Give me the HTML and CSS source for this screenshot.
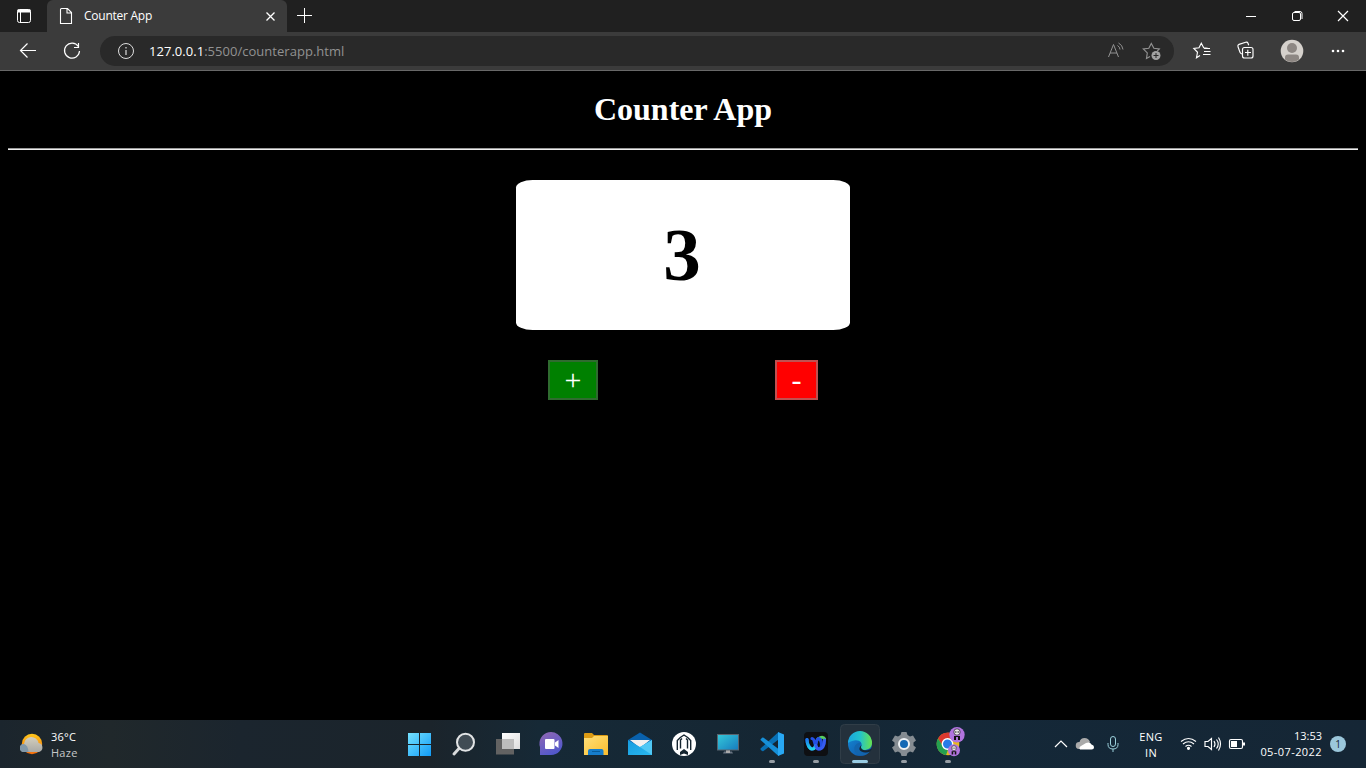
FILE: index.html
```html
<!DOCTYPE html>
<html lang="en">
<head>
<meta charset="utf-8">
<title>Counter App</title>
<link rel="stylesheet" href="styles.css">
</head>
<body>
<div class="screen">
  <header class="tabs">
    <svg class="tab-menu" width="47" height="32" viewBox="0 0 47 32" fill="none" stroke="#fff"><rect x="17.500" y="9.500" width="13" height="13" rx="2"/><path d="M17.500 11h13" stroke-width="3"/><path d="M20.500 12v10"/></svg>
    <div class="tab">
      <svg width="37" height="32" viewBox="0 0 37 32" fill="none" stroke="#fff" stroke-width="1.1"><path d="M14.500 8.500h6l4 4v11h-11v-14q0-1 1-1zM20 8.500v4.500h4.500"/></svg>
      <span class="tab-title">Counter App</span>
      <svg class="tab-close" width="32" height="32" viewBox="0 0 32 32" stroke="#fff" stroke-width="1.3"><path d="M11.500 12.500l8 8m0-8l-8 8"/></svg>
    </div>
    <svg width="36" height="32" viewBox="0 0 36 32" stroke="#fff"><path d="M10 15.500h15M17.500 8v15"/></svg>
    <svg class="window-buttons" width="138" height="32" viewBox="0 0 138 32" fill="none" stroke="#fff"><path d="M18 16.500h10"/><rect x="64.500" y="12.500" width="8" height="8" rx="1.500"/><path d="M66.500 11.500h5.500q2 0 2 2v5.500"/><path d="M110 11l10 10m0-10l-10 10" stroke-width="1.200"/></svg>
  </header>
  <nav class="toolbar">
    <svg width="100" height="38" viewBox="0 0 100 38" fill="none" stroke="#fff" stroke-width="1.200"><path d="M36 18.500H20.500m7-7l-7 7 7 7"/><path d="M78.300 14.500a7.500 7.500 0 1 0 1.200 4.500M78.500 11v4.500H74"/></svg>
    <div class="address">
      <svg width="49" height="30" viewBox="0 0 49 30" fill="none" stroke="#ddd"><circle cx="26" cy="15" r="7.500"/><path d="M26 14v5M26 11v1.500" stroke-width="1.200"/></svg>
      <span class="url"><b>127.0.0.1</b>:5500/counterapp.html</span>
      <svg class="address-tools" width="74" height="30" viewBox="0 0 74 30" fill="none" stroke="#929292"><path d="M8.500 21L13.500 8.500 18.500 21M10 17h7M17.500 9.500q2.500 1.500 2.500 4M18.500 7q4 2 4.500 6.500"/><path d="M50 20.500l-3.500 2 .8-5.600-4-3.900 5.500-.8L51.300 7.500l2.600 4.700 5.400.8-2 2" stroke-width="1.150"/><circle cx="56" cy="19.500" r="4.500" fill="#a2a2a2" stroke="none"/><path d="M56 17v5M53.500 19.500h5" stroke="#292929"/></svg>
    </div>
    <svg width="192" height="38" viewBox="0 0 192 38" fill="none" stroke="#fff" stroke-width="1.150"><path d="M26 23.500l-3.500 2.200 1-5.400-3.700-3.800 5.200-.8 2.300-4.500 2.400 4.500 4 .7M30 16.500h6M30 19.500h6.500M29 22.500h7.500"/><path d="M68 22q-1.500-.3-2-1.700L64 14.700q-.6-1.700 1-2.300l6.700-2.200q1.700-.5 2.300 1l.7 2"/><rect x="68.500" y="15.500" width="10.500" height="10.500" rx="2"/><path d="M71 20.500h6M73.800 17.700v6"/><circle cx="118" cy="19" r="11.300" fill="#d5d1cc" stroke="none"/><circle cx="118" cy="16" r="5" fill="#8d8783" stroke="none"/><path d="M111 27.500v-2q0-3 3-3h8q3 0 3 3v2a11 11 0 0 1-14 0z" fill="#8d8783" stroke="none"/><g fill="#fff" stroke="none"><circle cx="159" cy="19" r="1.300"/><circle cx="164" cy="19" r="1.300"/><circle cx="169" cy="19" r="1.300"/></g></svg>
  </nav>
  <main class="page">
    <h1 class="heading">Counter App</h1>
    <hr class="rule">
    <div class="counter">3</div>
    <div class="actions">
      <button class="button plus">+</button>
      <button class="button minus">-</button>
    </div>
  </main>
  <footer class="taskbar">
    <div class="weather">
      <svg width="26" height="26" viewBox="0 0 26 26"><defs><linearGradient id="sun" x2="0" y2="1"><stop stop-color="#ffc81c"/><stop offset="1" stop-color="#f46c0c"/></linearGradient><linearGradient id="cloud" x2="0" y2="1"><stop stop-color="#d4cfbd"/><stop offset="1" stop-color="#a9a9a5"/></linearGradient></defs><circle cx="14" cy="13" r="10.200" fill="url(#sun)"/><path d="M6 21a4 4 0 0 1 0-8 7.300 7.300 0 0 1 14.500-1 4.600 4.600 0 0 1 .5 9z" fill="url(#cloud)"/><path d="M6 21a4 4 0 0 1 0-8q4 1 4.500 8z" fill="#8298a8"/></svg>
      <div class="weather-text"><span class="degrees">36°C</span><span class="haze">Haze</span></div>
    </div>
    <div class="apps">
      <svg class="app" viewBox="0 0 44 48"><defs><linearGradient id="win" x2="1" y2="1"><stop stop-color="#75e2ff"/><stop offset="1" stop-color="#119bf7"/></linearGradient></defs><path fill="url(#win)" d="M10 13h11v11H10zM22 13h11v11H22zM10 25h11v11H10zM22 25h11v11H22z"/></svg>
      <svg class="app" viewBox="0 0 44 48"><path d="M17 28.500l-5 5.500" stroke="#d8dadb" stroke-width="3" stroke-linecap="round"/><circle cx="23.500" cy="22.300" r="8.500" fill="#414c54" stroke="#e2e4e5" stroke-width="2"/></svg>
      <svg class="app" viewBox="0 0 44 48"><defs><linearGradient id="pane" x2="1" y2="1"><stop stop-color="#fff"/><stop offset="1" stop-color="#ddd"/></linearGradient></defs><path fill="#626262" d="M10 19h18v15.500H10z"/><path fill="url(#pane)" d="M16 13h18v16H16z"/><path fill="#bdbdbd" d="M16 19h12v10H16z"/></svg>
      <svg class="app" viewBox="0 0 44 48"><defs><linearGradient id="chat" x2=".5" y2="1"><stop stop-color="#9368b3"/><stop offset="1" stop-color="#5258cb"/></linearGradient></defs><path d="M10 35v-8A11.500 11.500 0 1 1 21 35z" fill="url(#chat)"/><rect x="15" y="19" width="9.500" height="10" rx="1" fill="#fff"/><path d="M25 22.500l3.500-2.500v8L25 25.500z" fill="#fff"/></svg>
      <svg class="app" viewBox="0 0 44 48"><defs><linearGradient id="folder" x2="1" y2="1"><stop stop-color="#ffe07a"/><stop offset="1" stop-color="#fbbd2d"/></linearGradient></defs><path d="M10 14q0-1 1-1h7l2 2h13q1 0 1 1v9H10z" fill="#dd9b13"/><path d="M10 18h8l2-2h14v19H10z" fill="url(#folder)"/><path d="M14 35v-4q0-2 2-2h11.500q2 0 2 2v4z" fill="#167dcb"/><path d="M18 31.500h8" stroke="#075c9b"/></svg>
      <svg class="app" viewBox="0 0 44 48"><defs><linearGradient id="mail" x2="1" y2="1"><stop stop-color="#159bdf"/><stop offset="1" stop-color="#2ab8ef"/></linearGradient></defs><path d="M10 20l12-7.500L34 20v8H10z" fill="#0961ac"/><path d="M12 20h20l-10 8z" fill="#f0f0f0"/><path d="M10 20l12 7 12-7v15H10z" fill="url(#mail)"/><path d="M34 20v15L22 27z" fill="#50c8f5"/></svg>
      <svg class="app" viewBox="0 0 44 48"><circle cx="22" cy="24" r="12" fill="#fff"/><path d="M15.300 30v-9.500l3-3 3.700-2.500 3.700 2.500 3 3V30M18.500 28.500V20l1.500-1.500M25.500 28.500V20L24 18.500" fill="none" stroke="#14242f" stroke-width="1.400"/><path d="M18 35v-3l4-3 4 3v3l-4-1.500z" fill="#14242f"/></svg>
      <svg class="app" viewBox="0 0 44 48"><defs><linearGradient id="desk" x2="1" y2="1"><stop stop-color="#35c9da"/><stop offset="1" stop-color="#167abd"/></linearGradient></defs><path d="M17 33.500l1-2h8l1 2z" fill="#687481"/><path d="M20 30h4v3h-4z" fill="#aaa"/><rect x="11.500" y="14.500" width="21" height="15.500" fill="url(#desk)" stroke="#59646e"/></svg>
      <svg class="app" viewBox="0 0 44 48"><path d="M10.500 28.500L28.500 12v7.500L13.500 31q-1 .5-1.800-.3l-1.200-1.200z" fill="#0870b4"/><path d="M10.500 19.500l1.500-1.700q.8-.6 1.700 0L28.500 29v7L10.500 20z" fill="#168fd7"/><path d="M28 12l6 2.500v19L28 36z" fill="#28a8f4"/><rect class="running" x="19" y="40" width="6" height="3" rx="1.500"/></svg>
      <svg class="app" viewBox="0 0 44 48"><defs><linearGradient id="wb" x2="0" y2="1"><stop stop-color="#1a79ed"/><stop offset="1" stop-color="#22d8e6"/></linearGradient></defs><rect x="10" y="12" width="24" height="24" rx="4" fill="#0e0f12"/><path d="M24 19q5-3.500 6.500 0" fill="none" stroke="#55ce62" stroke-width="3.200" stroke-linecap="round"/><path d="M13 19.500c0 5 2.500 9.500 5.500 9.500 4.500 0 3-10.500 6-10.500s5 10.500 0 10.500c-4 0-3-10.500-6.500-10.500" fill="none" stroke="#2450e4" stroke-width="3.200" stroke-linecap="round"/><path d="M13 19.500c0 5 2.500 9.500 5.500 9.500q2 0 3-3" fill="none" stroke="url(#wb)" stroke-width="3.200" stroke-linecap="round"/><path d="M30.500 20c0 5-2 9-5.500 9q-2 0-3-3" fill="none" stroke="#365cf0" stroke-width="3.200" stroke-linecap="round"/><rect class="running" x="19" y="40" width="6" height="3" rx="1.500"/></svg>
      <svg class="app" viewBox="0 0 44 48"><defs><linearGradient id="edge"><stop stop-color="#1aa5df"/><stop offset=".5" stop-color="#22c2cc"/><stop offset="1" stop-color="#67e34e"/></linearGradient><linearGradient id="edgeblue" x2="1" y2="1"><stop stop-color="#168bd5"/><stop offset="1" stop-color="#0d4ea3"/></linearGradient></defs><rect x="2.500" y="4.500" width="39" height="39" rx="4" fill="#24313c" stroke="#303d47"/><circle cx="22" cy="24" r="12" fill="url(#edgeblue)"/><path d="M10 23a12 12 0 0 1 24 0c0 5-4 7-8 7-3 0-4-1-3-3 3-5-4-10-13-4z" fill="url(#edge)"/><path d="M23 23c-4 5-1 10 4 10q3 0 5.500-2c-7 9-18 3-16-4 1-3 4-5 6.500-4z" fill="#1365ad"/><path d="M23.500 25c-2 4 2 6 7 5l3.500-1.500-1.700 3q-5 2-8.800 0t-1-5.500" fill="#152633"/><rect class="active" x="14" y="40" width="16" height="3" rx="1.500"/></svg>
      <svg class="app" viewBox="0 0 44 48"><path d="M19.500 12h5l1 3 2.500 1.500 3-1 3 5-2.500 2v3l2.500 2-3 5-3-1-2.500 1.500-1 3h-5l-1-3-2.500-1.500-3 1-3-5 2.500-2v-3l-2.500-2 3-5 3 1 2.500-1.500z" fill="#858c92"/><circle cx="22" cy="24" r="5" fill="#1268b5" stroke="#edf1f4" stroke-width="2"/><rect class="running" x="19" y="40" width="6" height="3" rx="1.500"/></svg>
      <svg class="app" viewBox="0 0 44 48"><circle cx="22" cy="24" r="11.300" fill="#e8b81e"/><path d="M12 18.500A11.300 11.300 0 0 1 32 18.500H22L17 27z" fill="#dc392e"/><path d="M12 18.500L17.500 27 22 29.500 20 35.200A11.300 11.300 0 0 1 12 18.500z" fill="#24a050"/><circle cx="21.500" cy="24" r="5.200" fill="#267be9" stroke="#fff" stroke-width="1.400"/><g id="avatar"><circle cx="31" cy="14.700" r="7.700" fill="#b174df"/><circle cx="31" cy="12" r="3.200" fill="#e8e6e8" stroke="#33263d" stroke-width=".8"/><path d="M28 20v-4h6v4h-2v-3h-2v3z" fill="#111"/><path d="M29 12h1.500M31.500 12h1.500" stroke="#111"/></g><use href="#avatar" transform="translate(3.800 18.800) scale(.78)"/><rect class="running" x="19" y="40" width="6" height="3" rx="1.500"/></svg>
    </div>
    <div class="tray">
      <svg width="82" height="48" viewBox="0 0 82 48" fill="none"><path d="M10 27l6-6 6 6" stroke="#fff" stroke-width="1.200"/><path d="M34 29a3.500 3.500 0 0 1 .5-7q1-4 5-4 4 0 5.500 4l-5 7z" fill="#aaa"/><path d="M35 29.500q-1.500-2 1-3.500l5-3q4-1.500 5.500 1.500 2.500.5 2.500 2.500 0 2.500-2.500 2.500z" fill="#fff"/><rect x="65.500" y="16.500" width="5" height="10" rx="2.500" stroke="#9bd0db"/><path d="M63 23v1.500q0 4.500 5 4.500t5-4.500V23M68 29v3" stroke="#9bd0db"/></svg>
      <div class="language">ENG<br>IN</div>
      <svg class="status" width="80" height="48" viewBox="0 0 80 48" fill="none" stroke="#fff" stroke-width="1.150"><path d="M10 21.500q7.500-6 15 0M12 24q5.500-4.500 11 0M14.500 26.500q3-2.500 6 0"/><circle cx="17.500" cy="28.300" r="1" fill="#fff"/><path d="M34 21.500h3l3.500-3v11l-3.500-3h-3zM43 21q2 3 0 6M45.500 19.500q3.500 4.500 0 9M47.500 17.500q4 6.500 0 13"/><rect x="58.500" y="19.500" width="13" height="9" rx="1.500"/><path d="M60 21h6v6h-6z" fill="#fff" stroke="none"/><path d="M73 22.500v3" stroke-width="2"/></svg>
      <div class="clock"><span>13:53</span><span class="date">05-07-2022</span></div>
      <div class="notice">1</div>
    </div>
  </footer>
</div>
</body>
</html>
```
FILE: styles.css
```css
* { box-sizing: border-box; }
body { margin: 0; background: #000; color: #fff; overflow: hidden; font: 12px "Open Sans", "Noto Sans", sans-serif; }
svg { display: block; flex-shrink: 0; }
.screen { width: 1366px; height: 768px; display: flex; flex-direction: column; }
.tabs { height: 32px; display: flex; background: #202020; }
.tab { width: 240px; height: 32px; display: flex; align-items: center; background: #3b3b3b; border-radius: 6px 6px 0 0; }
.tab-title { font-size: 12px; letter-spacing: -.25px; line-height: 32px; }
.tab-close { margin-left: auto; }
.window-buttons { margin-left: auto; }
.toolbar { height: 39px; display: flex; background: #3b3b3b; border-bottom: 1px solid #686868; }
.address { width: 1074px; height: 30px; margin-top: 4px; display: flex; align-items: center; border-radius: 15px; background: #292929; }
.url { color: #929292; font-size: 13px; letter-spacing: .03px; line-height: 28px; white-space: nowrap; }
.url b { color: #fff; font-weight: 400; }
.address-tools { margin-left: auto; }
.page { height: 649px; padding: 21px 8px 0; display: flex; flex-direction: column; align-items: center; font-family: "Liberation Serif", serif; }
.heading { margin: 0; height: 56px; font-size: 32px; line-height: 35px; }
.rule { width: 100%; height: 2px; margin: 0; border: 0; border-top: 1px solid #9a9a9a; background: #eee; flex-shrink: 0; }
.counter { width: 334px; height: 150px; margin-top: 30px; padding-right: 2px; flex-shrink: 0; border-radius: 5%; background: #fff; color: #000; font-size: 75px; font-weight: 700; line-height: 150px; text-align: center; }
.actions { width: 270px; margin-top: 30px; display: flex; justify-content: space-between; }
.button { height: 40px; padding: 0; color: #fff; font: 30px/34px "Liberation Serif", serif; border: 2px solid; }
.plus { width: 50px; background: #008000; border-color: #2f6b2f; }
.minus { width: 43px; background: #f00; border-color: #c05050; }
.taskbar { height: 48px; display: flex; background: linear-gradient(90deg, #1b252d 0, #20282b 110px, #1b252e 240px, #1b242b 430px, #162936 540px, #152633 800px, #142838 950px, #152635 1366px); }
.weather { width: 398px; padding: 11px 0 0 18px; display: flex; gap: 7px; }
.weather-text { display: flex; flex-direction: column; font-size: 11px; line-height: 16px; margin-top: -2px; letter-spacing: .25px; }
.haze { color: #c6c8c9; }
.apps { width: 572px; display: flex; }
.app { width: 44px; height: 48px; }
.running { fill: #969da4; }
.active { fill: #99cce4; }
.tray { flex: 1; padding-left: 75px; display: flex; font-size: 11px; line-height: 16px; }
.language { width: 48px; padding-top: 9px; text-align: center; letter-spacing: .3px; }
.status { margin: 0 3px 0 -4px; }
.clock { width: 68px; padding-top: 8px; display: flex; flex-direction: column; align-items: flex-end; white-space: nowrap; }
.date { letter-spacing: .42px; }
.notice { width: 16px; height: 16px; margin: 16px 0 0 8px; border-radius: 50%; background: #9bc7db; color: #152635; font-size: 10px; text-align: center; }
```
